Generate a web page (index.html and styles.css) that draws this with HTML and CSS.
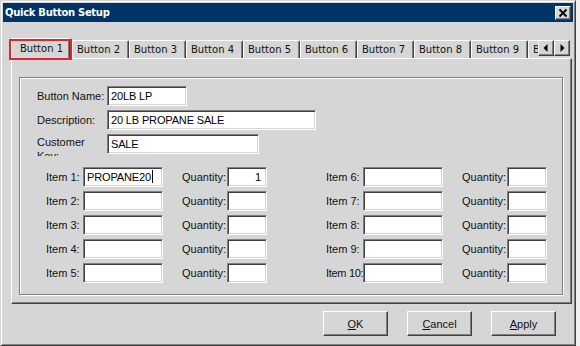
FILE: index.html
```html
<!DOCTYPE html>
<html lang="en">
<head>
    <meta charset="UTF-8">
    <title>Quick Button Setup</title>
    <link rel="stylesheet" href="styles.css">
</head>
<body>
<div class="window">
    <div class="titlebar">
        <span class="title">Quick Button Setup</span>
        <span class="close">
            <svg width="14" height="12" viewBox="0 0 14 12"><path d="M3.5 2.5 L10.5 9.5 M10.5 2.5 L3.5 9.5" stroke="#000" stroke-width="1.8" fill="none"/></svg>
        </span>
    </div>
    <div class="tabstrip">
        <div class="tabs">
            <div class="tab active">Button 1</div>
            <div class="tab">Button 2</div>
            <div class="tab">Button 3</div>
            <div class="tab">Button 4</div>
            <div class="tab">Button 5</div>
            <div class="tab">Button 6</div>
            <div class="tab">Button 7</div>
            <div class="tab">Button 8</div>
            <div class="tab">Button 9</div>
            <div class="tab">Button 10</div>
        </div>
        <div class="arrows">
            <span class="arrow"><svg width="14" height="14" viewBox="0 0 14 14"><polygon points="8.5,3 4.5,7 8.5,11" fill="#000"/></svg></span>
            <span class="arrow"><svg width="14" height="14" viewBox="0 0 14 14"><polygon points="5.5,3 9.5,7 5.5,11" fill="#000"/></svg></span>
        </div>
    </div>
    <div class="panel">
        <div class="group">
            <div class="head">
                <span class="label">Button Name:</span>
                <div class="field w-name">20LB LP</div>
                <span class="label">Description:</span>
                <div class="field w-desc">20 LB PROPANE SALE</div>
                <span class="label clip">Customer Key:</span>
                <div class="field w-cust">SALE</div>
            </div>
            <div class="items">
                <div class="item-grid">
                    <span class="label">Item 1:</span>
                    <div class="field">PROPANE20<span class="caret"></span></div>
                    <span class="label qty-label">Quantity:</span>
                    <div class="field qty">1</div>
                    <span class="label">Item 2:</span>
                    <div class="field"></div>
                    <span class="label qty-label">Quantity:</span>
                    <div class="field qty"></div>
                    <span class="label">Item 3:</span>
                    <div class="field"></div>
                    <span class="label qty-label">Quantity:</span>
                    <div class="field qty"></div>
                    <span class="label">Item 4:</span>
                    <div class="field"></div>
                    <span class="label qty-label">Quantity:</span>
                    <div class="field qty"></div>
                    <span class="label">Item 5:</span>
                    <div class="field"></div>
                    <span class="label qty-label">Quantity:</span>
                    <div class="field qty"></div>
                </div>
                <div class="item-grid">
                    <span class="label">Item 6:</span>
                    <div class="field"></div>
                    <span class="label qty-label">Quantity:</span>
                    <div class="field qty"></div>
                    <span class="label">Item 7:</span>
                    <div class="field"></div>
                    <span class="label qty-label">Quantity:</span>
                    <div class="field qty"></div>
                    <span class="label">Item 8:</span>
                    <div class="field"></div>
                    <span class="label qty-label">Quantity:</span>
                    <div class="field qty"></div>
                    <span class="label">Item 9:</span>
                    <div class="field"></div>
                    <span class="label qty-label">Quantity:</span>
                    <div class="field qty"></div>
                    <span class="label tight">Item 10:</span>
                    <div class="field"></div>
                    <span class="label qty-label">Quantity:</span>
                    <div class="field qty"></div>
                </div>
            </div>
        </div>
    </div>
    <div class="actions">
        <button class="btn"><u>O</u>K</button>
        <button class="btn"><u>C</u>ancel</button>
        <button class="btn"><u>A</u>pply</button>
    </div>
</div>
</body>
</html>
```
FILE: styles.css
```css
* {
    margin: 0;
    padding: 0;
    box-sizing: border-box;
}

body {
    background: #f0f0f0;
    font-family: "Liberation Sans", Arial, sans-serif;
    font-size: 11px;
    color: #111;
}

.window {
    width: 576px;
    height: 346px;
    background: #d6d6d6;
    border: 1px solid;
    border-color: #d6d6d6 #404040 #404040 #d6d6d6;
    box-shadow: inset 1px 1px #fff, inset -1px -1px #808080;
    padding: 2px;
}

.titlebar {
    height: 19px;
    background: #003366;
    color: #fff;
    display: flex;
    align-items: center;
    justify-content: space-between;
    padding: 0 2px 0 2px;
    font: bold 10px "DejaVu Sans", sans-serif;
    letter-spacing: -0.3px;
}

.close {
    width: 16px;
    height: 14px;
    background: #d6d6d6;
    border: 1px solid;
    border-color: #fff #404040 #404040 #fff;
    box-shadow: inset -1px -1px #808080;
    display: flex;
}

/* tabs */
.tabstrip {
    display: flex;
    align-items: flex-end;
    height: 37px;
    margin-left: 8px;
    position: relative;
    z-index: 1;
}

.tabs {
    display: flex;
    align-items: flex-end;
    width: 527px;
    height: 37px;
    clip-path: inset(-4px 0 -4px -4px);
}

.tab {
    flex: none;
    width: 57px;
    height: 18px;
    margin-bottom: 1px;
    border-top: 1px solid #fff;
    border-left: 1px solid #fff;
    border-right: 1px solid #404040;
    box-shadow: inset -1px 0 #808080;
    border-radius: 2px 2px 0 0;
    padding: 2px 0 0 4px;
    font: 10px "DejaVu Sans", sans-serif;
    line-height: 14px;
    white-space: nowrap;
    color: #111;
}

.tab.active {
    width: 59px;
    height: 21px;
    margin: 0 2px 0 0;
    padding: 3px 0 0 8px;
    position: relative;
    background: #d6d6d6;
}

.tab.active::after {
    content: "";
    position: absolute;
    left: -3px;
    right: -3px;
    top: 0;
    bottom: -1px;
    border: 2px solid #e3242b;
}

.arrows {
    display: flex;
    margin-bottom: 3px;
}

.arrow {
    width: 16px;
    height: 16px;
    background: #d6d6d6;
    border: 1px solid;
    border-color: #fff #404040 #404040 #fff;
    box-shadow: inset -1px -1px #808080;
    display: flex;
}

/* page */
.panel {
    margin: -1px 1px 0 8px;
    height: 246px;
    border: 1px solid;
    border-color: #fff #404040 #404040 #fff;
    box-shadow: inset -1px -1px #808080;
    padding: 18px 0 0 7px;
}

.group {
    width: 544px;
    height: 218px;
    border: 1px solid #808080;
    box-shadow: 1px 1px 0 #fff, inset 1px 1px 0 #fff;
    padding: 8px 0 0 17px;
}

.head {
    display: grid;
    grid-template-columns: 70px auto;
    grid-auto-rows: 20px;
    row-gap: 4px;
    align-items: center;
    justify-items: start;
}

.label {
    white-space: nowrap;
    position: relative;
    z-index: 1;
}

.label.tight {
    letter-spacing: -0.3px;
}

.label.clip {
    white-space: normal;
    width: 62px;
    height: 22px;
    padding-top: 1px;
    line-height: 14px;
    overflow: hidden;
    align-self: start;
}

.field {
    width: 80px;
    height: 20px;
    background: #fff;
    border: 1px solid;
    border-color: #808080 #fff #fff #808080;
    box-shadow: inset 1px 1px #404040, inset -1px -1px #d6d6d6;
    padding: 0 3px;
    line-height: 18px;
    font-size: 11px;
    letter-spacing: -0.15px;
    color: #000;
    white-space: nowrap;
    overflow: hidden;
}

.w-name {
    width: 80px;
}

.w-desc {
    width: 209px;
}

.w-cust {
    width: 152px;
}

.caret {
    display: inline-block;
    width: 1px;
    height: 13px;
    background: #000;
    vertical-align: -2px;
    margin-left: 1px;
}

.items {
    display: flex;
    gap: 59px;
    margin: 13px 0 0 9px;
}

.item-grid {
    display: grid;
    grid-template-columns: 37px 80px 64px 40px;
    grid-auto-rows: 20px;
    row-gap: 4px;
    align-items: center;
}

.qty-label {
    padding-left: 19px;
}

.field.qty {
    width: 40px;
    text-align: right;
    padding-right: 5px;
}

/* buttons */
.actions {
    display: flex;
    justify-content: flex-end;
    gap: 19px;
    margin-top: 7px;
    padding-right: 17px;
}

.btn {
    width: 65px;
    height: 25px;
    background: #d6d6d6;
    border: 1px solid;
    border-color: #fff #404040 #404040 #fff;
    box-shadow: inset -1px -1px #808080;
    font: 11px "Liberation Sans", Arial, sans-serif;
    color: #111;
}
```
